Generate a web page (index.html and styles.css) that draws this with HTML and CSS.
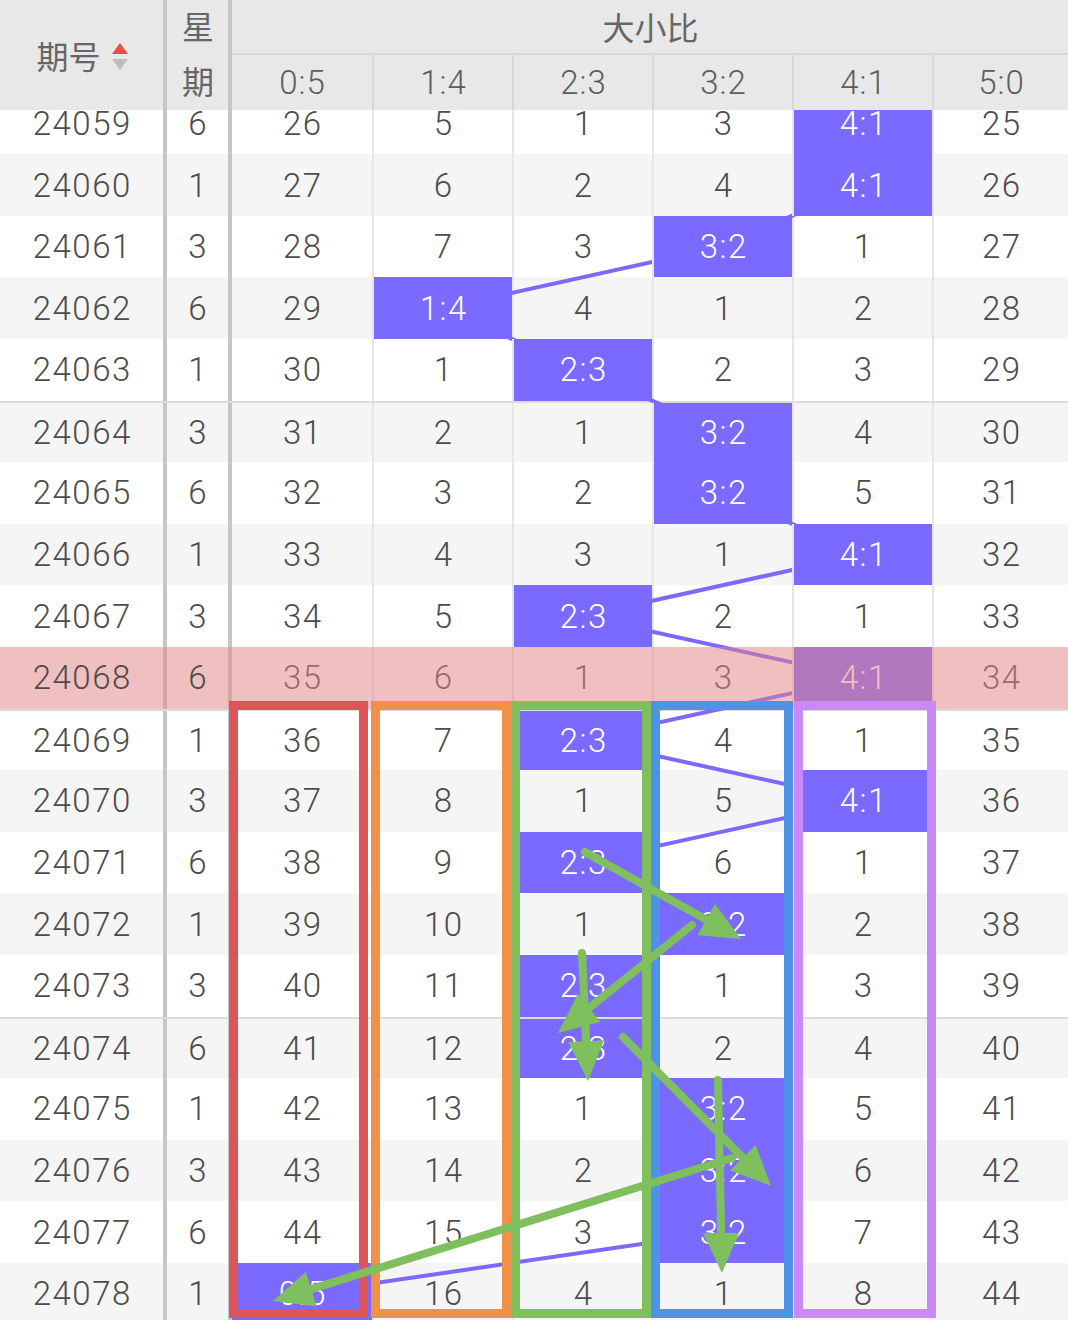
FILE: index.html
```html
<!DOCTYPE html>
<html lang="zh">
<head>
<meta charset="utf-8">
<title>大小比走势</title>
<link rel="stylesheet" href="styles.css">
</head>
<body>
<div class="page">
  <div class="head">
    <div class="h-issue"><span class="cjk">期号</span><span class="sort"><i class="up"></i><i class="down"></i></span></div>
    <div class="h-week"><span class="cjk">星</span><span class="cjk">期</span></div>
    <div class="h-title cjk">大小比</div>
    <div class="h-col">0:5</div>
    <div class="h-col">1:4</div>
    <div class="h-col">2:3</div>
    <div class="h-col">3:2</div>
    <div class="h-col">4:1</div>
    <div class="h-col">5:0</div>
  </div>

  <div class="body">
    <svg class="trend" width="1068" height="1210" viewBox="0 110 1068 1210">
      <polyline points="862,61.8 862,123.4 862,185 722,246.6 442,308.2 582,369.8 722,431.4 722,493 862,554.6 582,616.2 862,677.8 582,739.4 862,801 582,862.6 722,924.2 582,985.8 582,1047.4 722,1109 722,1170.6 722,1232.2 302,1293.8"/>
    </svg>
    <div class="rows">
      <div class="row"><div class="c-no">24059</div><div class="c-wk">6</div><div class="c">26</div><div class="c">5</div><div class="c">1</div><div class="c">3</div><div class="c on">4:1</div><div class="c">25</div></div>
      <div class="row"><div class="c-no">24060</div><div class="c-wk">1</div><div class="c">27</div><div class="c">6</div><div class="c">2</div><div class="c">4</div><div class="c on">4:1</div><div class="c">26</div></div>
      <div class="row"><div class="c-no">24061</div><div class="c-wk">3</div><div class="c">28</div><div class="c">7</div><div class="c">3</div><div class="c on">3:2</div><div class="c">1</div><div class="c">27</div></div>
      <div class="row"><div class="c-no">24062</div><div class="c-wk">6</div><div class="c">29</div><div class="c on">1:4</div><div class="c">4</div><div class="c">1</div><div class="c">2</div><div class="c">28</div></div>
      <div class="row"><div class="c-no">24063</div><div class="c-wk">1</div><div class="c">30</div><div class="c">1</div><div class="c on">2:3</div><div class="c">2</div><div class="c">3</div><div class="c">29</div></div>
      <div class="row grp"><div class="c-no">24064</div><div class="c-wk">3</div><div class="c">31</div><div class="c">2</div><div class="c">1</div><div class="c on">3:2</div><div class="c">4</div><div class="c">30</div></div>
      <div class="row"><div class="c-no">24065</div><div class="c-wk">6</div><div class="c">32</div><div class="c">3</div><div class="c">2</div><div class="c on">3:2</div><div class="c">5</div><div class="c">31</div></div>
      <div class="row"><div class="c-no">24066</div><div class="c-wk">1</div><div class="c">33</div><div class="c">4</div><div class="c">3</div><div class="c">1</div><div class="c on">4:1</div><div class="c">32</div></div>
      <div class="row"><div class="c-no">24067</div><div class="c-wk">3</div><div class="c">34</div><div class="c">5</div><div class="c on">2:3</div><div class="c">2</div><div class="c">1</div><div class="c">33</div></div>
      <div class="row hot"><div class="c-no"><span class="keep">24068</span></div><div class="c-wk"><span class="keep">6</span></div><div class="c">35</div><div class="c">6</div><div class="c">1</div><div class="c">3</div><div class="c on">4:1</div><div class="c">34</div></div>
      <div class="row grp"><div class="c-no">24069</div><div class="c-wk">1</div><div class="c">36</div><div class="c">7</div><div class="c on">2:3</div><div class="c">4</div><div class="c">1</div><div class="c">35</div></div>
      <div class="row"><div class="c-no">24070</div><div class="c-wk">3</div><div class="c">37</div><div class="c">8</div><div class="c">1</div><div class="c">5</div><div class="c on">4:1</div><div class="c">36</div></div>
      <div class="row"><div class="c-no">24071</div><div class="c-wk">6</div><div class="c">38</div><div class="c">9</div><div class="c on">2:3</div><div class="c">6</div><div class="c">1</div><div class="c">37</div></div>
      <div class="row"><div class="c-no">24072</div><div class="c-wk">1</div><div class="c">39</div><div class="c">10</div><div class="c">1</div><div class="c on">3:2</div><div class="c">2</div><div class="c">38</div></div>
      <div class="row"><div class="c-no">24073</div><div class="c-wk">3</div><div class="c">40</div><div class="c">11</div><div class="c on">2:3</div><div class="c">1</div><div class="c">3</div><div class="c">39</div></div>
      <div class="row grp"><div class="c-no">24074</div><div class="c-wk">6</div><div class="c">41</div><div class="c">12</div><div class="c on">2:3</div><div class="c">2</div><div class="c">4</div><div class="c">40</div></div>
      <div class="row"><div class="c-no">24075</div><div class="c-wk">1</div><div class="c">42</div><div class="c">13</div><div class="c">1</div><div class="c on">3:2</div><div class="c">5</div><div class="c">41</div></div>
      <div class="row"><div class="c-no">24076</div><div class="c-wk">3</div><div class="c">43</div><div class="c">14</div><div class="c">2</div><div class="c on">3:2</div><div class="c">6</div><div class="c">42</div></div>
      <div class="row"><div class="c-no">24077</div><div class="c-wk">6</div><div class="c">44</div><div class="c">15</div><div class="c">3</div><div class="c on">3:2</div><div class="c">7</div><div class="c">43</div></div>
      <div class="row"><div class="c-no">24078</div><div class="c-wk">1</div><div class="c on">0:5</div><div class="c">16</div><div class="c">4</div><div class="c">1</div><div class="c">8</div><div class="c">44</div></div>
    </div>
  </div>

  <svg class="marks" width="1068" height="1320" viewBox="0 0 1068 1320">
    <defs>
      <marker id="ah" markerUnits="userSpaceOnUse" markerWidth="40" markerHeight="36" refX="28" refY="18" orient="auto">
        <path d="M0,0 L40,18 L0,36 z" fill="#80bf5e"/>
      </marker>
    </defs>
    <g class="boxes">
      <rect x="233.5" y="705.5" width="130" height="608" stroke="#dc5558"/>
      <rect x="375.5" y="705.5" width="131" height="608" stroke="#f0914a"/>
      <rect x="515.5" y="705.5" width="131" height="608" stroke="#80bf5e"/>
      <rect x="655.5" y="705.5" width="133" height="608" stroke="#4e93e6"/>
      <rect x="798.5" y="705.5" width="133" height="608" stroke="#c98af7"/>
    </g>
    <g class="arrows">
      <line x1="585" y1="852" x2="730.5" y2="933.2"/>
      <line x1="692" y1="925" x2="567.3" y2="1025.5"/>
      <line x1="582" y1="953" x2="587.4" y2="1069"/>
      <line x1="623" y1="1037" x2="762.5" y2="1177.5"/>
      <line x1="718" y1="1080" x2="721.7" y2="1261"/>
      <line x1="732" y1="1158" x2="284.5" y2="1297.4"/>
    </g>
  </svg>
</div>
</body>
</html>
```

FILE: styles.css
```css
html, body {
  margin: 0;
  padding: 0;
  background: #ffffff;
}

body {
  font-family: Roboto, "Noto Sans CJK SC", sans-serif;
  font-weight: 300;
}

.cjk {
  font-family: "Noto Sans CJK SC", sans-serif;
  font-weight: 400;
}

.page {
  position: relative;
  width: 1068px;
  height: 1320px;
  overflow: hidden;
}

/* ---------- header ---------- */
.head {
  display: grid;
  grid-template-columns: 167px 65px repeat(5, 140px) 136px;
  grid-template-rows: 55px 55px;
  background: #e8e8e8;
  color: #5e5e5e;
  font-size: 33px;
  letter-spacing: 1px;
}

.head > div {
  box-sizing: border-box;
  display: flex;
  align-items: center;
  justify-content: center;
  padding-left: 1px;
}

.h-issue {
  grid-row: 1 / 3;
  grid-column: 1;
  border-right: 4px solid #c6c6c6;
  gap: 11px;
}

.h-issue .cjk {
  font-size: 32px;
  letter-spacing: 0;
  color: #666666;
}

.sort {
  display: flex;
  flex-direction: column;
  gap: 5px;
  padding-top: 2px;
}

.sort i {
  display: block;
  width: 0;
  height: 0;
  border-left: 8px solid transparent;
  border-right: 8px solid transparent;
}

.sort .up {
  border-bottom: 11px solid #ee4a4a;
}

.sort .down {
  border-top: 11px solid #bcbcbc;
}

.h-week {
  grid-row: 1 / 3;
  grid-column: 2;
  border-right: 4px solid #c6c6c6;
  flex-direction: column;
  font-size: 32px;
  letter-spacing: 0;
  color: #666666;
}

.h-week span {
  height: 55px;
  display: flex;
  align-items: center;
  padding-bottom: 5px;
  box-sizing: border-box;
}

.h-title {
  grid-row: 1;
  grid-column: 3 / 9;
  border-bottom: 2px solid #d8d8d8;
  font-size: 32px;
  letter-spacing: 0;
  padding-bottom: 2px;
  color: #666666;
}

.h-col {
  grid-row: 2;
}

.h-col + .h-col {
  border-left: 2px solid #d8d8d8;
}

/* ---------- body ---------- */
.body {
  position: relative;
  height: 1210px;
  overflow: hidden;
}

.rows {
  margin-top: -17.4px;
}

.row {
  display: grid;
  grid-template-columns: 167px 65px repeat(5, 140px) 136px;
  height: 61.6px;
  box-sizing: border-box;
  font-size: 33px;
  letter-spacing: 1.5px;
  color: #4c4c4c;
  background: #ffffff;
}

.row:nth-child(even) {
  background: #f5f5f5;
}

.row.grp {
  border-top: 2px solid #dcdcdc;
}

.row > div {
  box-sizing: border-box;
  display: flex;
  align-items: center;
  justify-content: center;
  padding-left: 1.5px;
}

.c-no,
.c-wk {
  border-right: 4px solid #c6c6c6;
}

.c + .c {
  border-left: 2px solid #e6e6e6;
}

.c.on {
  position: relative;
  z-index: 2;
  background: #7a6aff;
  background-clip: padding-box;
  color: #ffffff;
}

.row.hot {
  position: relative;
  background: #ffffff;
}

.row.hot::after {
  content: "";
  position: absolute;
  inset: 0;
  background: rgba(226, 133, 133, 0.52);
  z-index: 3;
}

.row.hot .keep {
  position: relative;
  z-index: 4;
}

.trend {
  position: absolute;
  left: 0;
  top: 0;
  z-index: 1;
}

.trend polyline {
  fill: none;
  stroke: #7a6aff;
  stroke-width: 4;
  stroke-linejoin: round;
}

/* ---------- annotations ---------- */
.marks {
  position: absolute;
  left: 0;
  top: 0;
  z-index: 10;
  pointer-events: none;
}

.boxes rect {
  fill: none;
  stroke-width: 9;
}

.arrows line {
  stroke: #80bf5e;
  stroke-width: 8;
  stroke-linecap: round;
  marker-end: url(#ah);
}
```
